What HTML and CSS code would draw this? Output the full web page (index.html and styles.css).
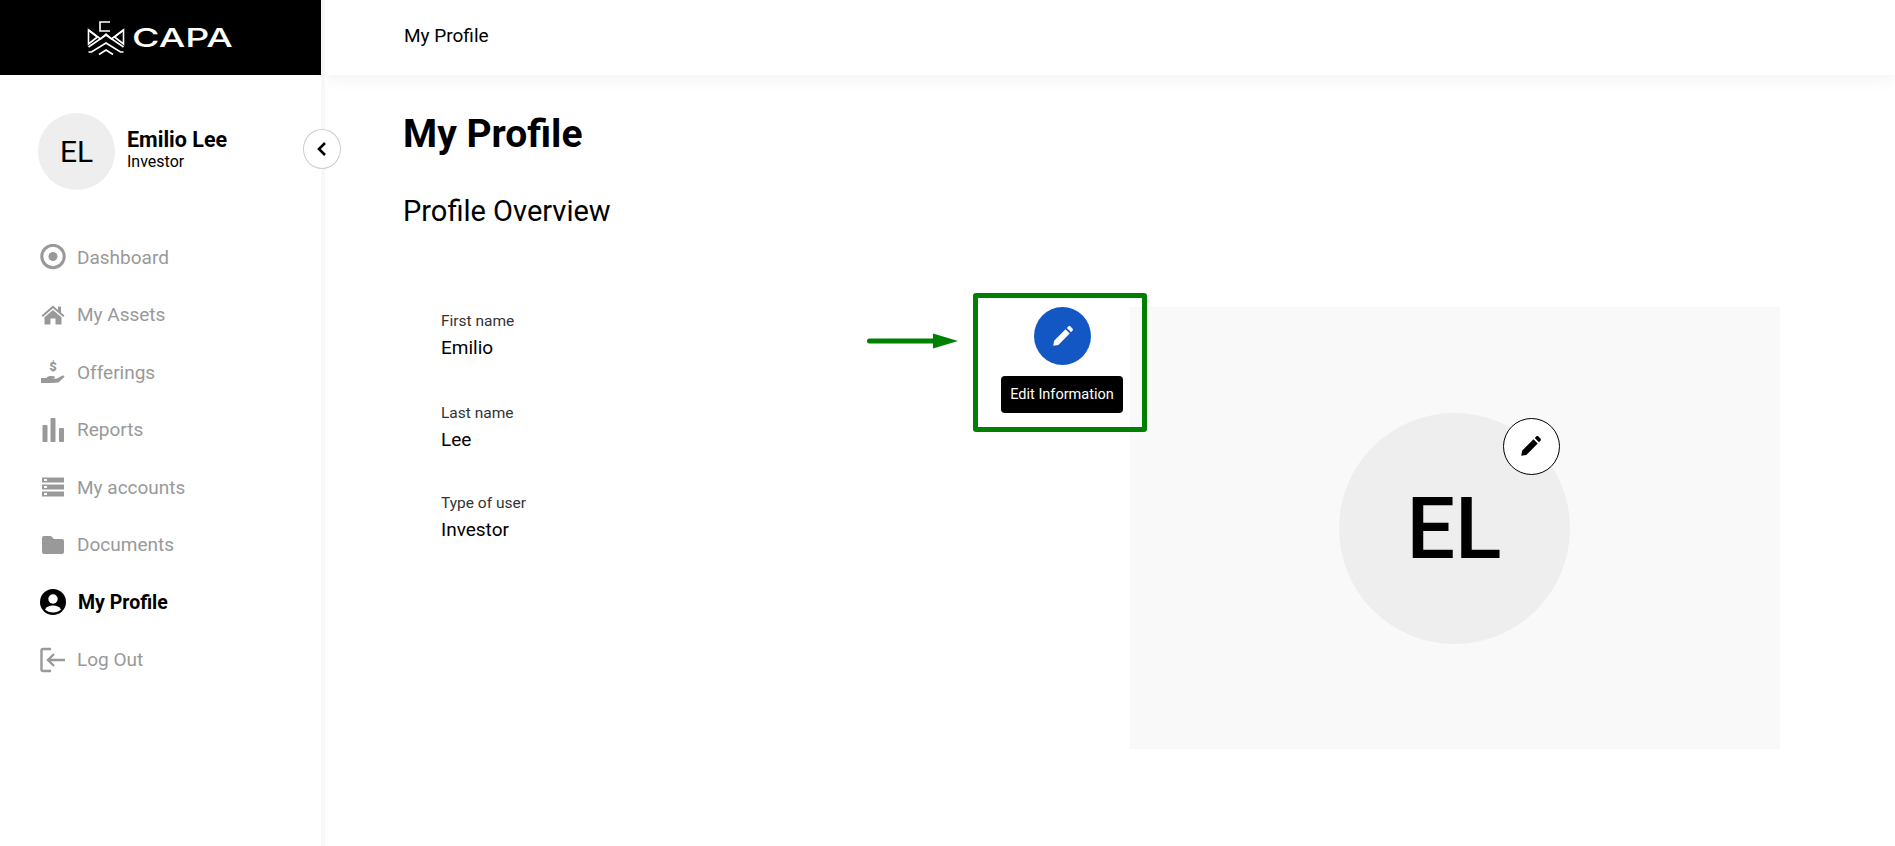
FILE: index.html
```html
<!DOCTYPE html>
<html lang="en">

<head>
    <meta charset="UTF-8">
    <meta name="viewport" content="width=device-width, initial-scale=1.0">
    <title>My Profile</title>
    <link rel="stylesheet" href="styles.css">
</head>

<body>
    <div class="app">
        <!-- sidebar -->
        <aside class="sidebar">
            <div class="logo">
                <svg class="logo-mark" viewBox="0 0 38 36" fill="none" stroke="#fff" stroke-width="1.6">
                    <path d="M23 2H13v9h10" />
                    <path d="M1.500 10v14l9-7zM36.500 10v14l-9-7z" />
                    <path d="M1.500 10l12 9 5.500-5 5.500 5 12-9" />
                    <path d="M1.500 27l17.500-12 17.500 12" />
                    <path d="M1.500 32h3l14.500-9 14.500 9h3" />
                    <path d="M12 34.500l7-4.500 7 4.500" />
                </svg>
                <span class="logo-text">CAPA</span>
            </div>
            <div class="user">
                <div class="user-avatar">EL</div>
                <div class="user-info">
                    <div class="user-name">Emilio Lee</div>
                    <div class="user-role">Investor</div>
                </div>
            </div>
            <a href="#" class="collapse">
                <svg viewBox="0 0 16 16" width="16" height="16" fill="none" stroke="#000" stroke-width="2.600">
                    <path d="M11 2L5 8l6 6" />
                </svg>
            </a>
            <ul class="nav">
                <li>
                    <a href="#">
                        <svg class="nav-icon" viewBox="0 0 26 26" fill="none" stroke="currentColor">
                            <circle cx="13" cy="12.500" r="11.200" stroke-width="3" />
                            <circle cx="13" cy="12.500" r="4.500" fill="currentColor" stroke="none" />
                        </svg>
                        Dashboard
                    </a>
                </li>
                <li>
                    <a href="#">
                        <svg class="nav-icon" viewBox="0 0 26 26" fill="currentColor">
                            <path d="M13 3.500L1.500 13.500l1.300 1.500L13 6.200 23.200 15l1.300-1.500-3.500-3V4.500h-3v3.400z" />
                            <path d="M13 8L4.500 15.300V22.500h6v-6h5v6h6v-7.200z" />
                        </svg>
                        My Assets
                    </a>
                </li>
                <li>
                    <a href="#">
                        <svg class="nav-icon" viewBox="0 0 26 26" fill="currentColor">
                            <path d="M1 19h5.500c1-1.300 2.500-2 4-1.900l3.500.2c1 .1 1.500 1.700.2 2l-3.200.3 5.500.1 6-3.200c1.300-.5 2.500.7 1.500 1.700l-5.500 5.300-7 .5H1z" />
                            <text class="nav-dollar" x="13" y="11.500" text-anchor="middle">$</text>
                        </svg>
                        Offerings
                    </a>
                </li>
                <li>
                    <a href="#">
                        <svg class="nav-icon" viewBox="0 0 26 26" fill="currentColor">
                            <rect x="2.500" y="8" width="5" height="17" rx="1" />
                            <rect x="10.500" y="1" width="5" height="24" rx="1" />
                            <rect x="19" y="11" width="5" height="14" rx="1" />
                        </svg>
                        Reports
                    </a>
                </li>
                <li>
                    <a href="#">
                        <svg class="nav-icon" viewBox="0 0 26 26" fill="currentColor">
                            <path fill-rule="evenodd" d="M2 3.500h22v5H2zM4 5v2h3V5zM2 10.500h22v5H2zM4 12v2h3v-2zM2 17.500h22v5H2zM4 19v2h3v-2z" />
                        </svg>
                        My accounts
                    </a>
                </li>
                <li>
                    <a href="#">
                        <svg class="nav-icon" viewBox="0 0 26 26" fill="currentColor">
                            <path d="M4 4h7l3 3h8a2 2 0 0 1 2 2v11a2 2 0 0 1-2 2H4a2 2 0 0 1-2-2V6a2 2 0 0 1 2-2z" />
                        </svg>
                        Documents
                    </a>
                </li>
                <li class="active">
                    <a href="#">
                        <svg class="nav-icon" viewBox="0 0 26 26">
                            <circle cx="13" cy="13" r="13" fill="currentColor" />
                            <circle cx="13" cy="10" r="4.700" fill="#fff" />
                            <path d="M5 20.500c1.500-3 4.500-4 8-4s6.500 1 8 4c-2 2-5 3-8 3s-6-1-8-3z" fill="#fff" />
                        </svg>
                        My Profile
                    </a>
                </li>
                <li>
                    <a href="#">
                        <svg class="nav-icon" viewBox="0 0 26 26" fill="none" stroke="currentColor" stroke-width="2.400">
                            <path d="M11 2H3a1.500 1.500 0 0 0-1.500 1.500v19A1.500 1.500 0 0 0 3 24h8" />
                            <path d="M25 13H8M14 7l-6 6 6 6" />
                        </svg>
                        Log Out
                    </a>
                </li>
            </ul>
        </aside>

        <!-- main area -->
        <main class="main">
            <header class="topbar">My Profile</header>
            <div class="content">
                <h1 class="title">My Profile</h1>
                <h2 class="subtitle">Profile Overview</h2>
                <div class="overview">
                    <div class="fields">
                        <div class="field">
                            <div class="field-label">First name</div>
                            <div class="field-value">Emilio</div>
                        </div>
                        <div class="field field-short">
                            <div class="field-label">Last name</div>
                            <div class="field-value">Lee</div>
                        </div>
                        <div class="field">
                            <div class="field-label">Type of user</div>
                            <div class="field-value">Investor</div>
                        </div>
                    </div>
                    <div class="edit">
                        <a href="#" class="edit-btn">
                            <svg viewBox="0 0 24 24" width="26" height="26" fill="#fff">
                                <path d="M3 21l.8-4.700L14.300 5.800l3.900 3.900L7.700 20.200zM15.500 4.600l1.300-1.300c.6-.6 1.500-.6 2.100 0l1.800 1.800c.6.6.6 1.500 0 2.100l-1.300 1.300z" />
                            </svg>
                        </a>
                        <div class="edit-tip">Edit Information</div>
                    </div>
                    <div class="photo">
                        <div class="photo-circle">
                            EL
                            <a href="#" class="photo-edit">
                                <svg viewBox="0 0 24 24" width="26" height="26" fill="#000">
                                    <path d="M3 21l.8-4.700L14.300 5.800l3.900 3.900L7.700 20.200zM15.500 4.600l1.300-1.300c.6-.6 1.500-.6 2.100 0l1.800 1.800c.6.6.6 1.500 0 2.100l-1.300 1.300z" />
                                </svg>
                            </a>
                        </div>
                    </div>
                </div>
            </div>
        </main>

        <!-- green annotation over the page -->
        <svg class="note-arrow" viewBox="0 0 92 16" width="92" height="16">
            <path d="M2.500 8h66" stroke="#008000" stroke-width="5" stroke-linecap="round" />
            <path d="M66 .5L91 8 66 15.500z" fill="#008000" />
        </svg>
        <div class="note-box"></div>
    </div>
</body>

</html>
```

FILE: styles.css
```css
* {
    margin: 0;
    padding: 0;
    box-sizing: border-box;
}

html,
body {
    height: 100%;
    overflow: hidden;
}

body {
    font-family: Roboto, "Liberation Sans", sans-serif;
    color: #000;
    background: #fff;
}

li {
    list-style: none;
}

a {
    text-decoration: none;
    color: inherit;
}

.app {
    position: relative;
    display: flex;
    height: 846px;
}

/* sidebar */
.sidebar {
    position: relative;
    flex: none;
    width: 325px;
    border-right: 4px solid #f7f7f7;
}

.logo {
    display: flex;
    align-items: center;
    justify-content: center;
    gap: 7px;
    height: 75px;
    background: #000;
    color: #fff;
}

.logo-mark {
    width: 38px;
    height: 36px;
}

.logo-text {
    width: 103px;
    font-family: Inter, sans-serif;
    font-size: 26px;
    font-weight: 500;
    line-height: 1;
    transform: scaleX(1.44);
    transform-origin: left center;
}

.user {
    display: flex;
    align-items: center;
    gap: 12px;
    padding: 38px 0 0 38px;
}

.user-avatar {
    display: flex;
    align-items: center;
    justify-content: center;
    width: 77px;
    height: 77px;
    border-radius: 50%;
    background: #eee;
    font-size: 30px;
}

.user-info {
    padding-bottom: 5px;
}

.user-name {
    font-size: 21.500px;
    font-weight: 700;
    line-height: 26px;
}

.user-role {
    font-size: 16px;
    line-height: 18px;
}

.collapse {
    position: absolute;
    top: 129px;
    left: 303px;
    z-index: 2;
    display: flex;
    align-items: center;
    justify-content: center;
    width: 38px;
    height: 40px;
    border: 1px solid #ccc;
    border-radius: 50%;
    background: #fff;
}

.nav {
    margin-top: 38.500px;
}

.nav a {
    display: flex;
    align-items: center;
    gap: 11px;
    height: 57.500px;
    padding-left: 40px;
    font-size: 19px;
    color: #999;
}

.nav-icon {
    flex: none;
    width: 26px;
    height: 26px;
}

.nav-dollar {
    font-family: Roboto, sans-serif;
    font-size: 13px;
    font-weight: 900;
}

.nav .active a {
    gap: 12px;
    font-size: 19.500px;
    font-weight: 700;
    color: #000;
}

/* main */
.main {
    flex: 1;
    min-width: 0;
}

.topbar {
    display: flex;
    align-items: center;
    height: 75px;
    padding: 0 0 4px 79px;
    font-size: 19px;
    box-shadow: 0 4px 16px rgba(0, 0, 0, .05);
}

.content {
    padding: 38px 115px 0 78px;
}

.title {
    font-size: 39px;
    font-weight: 700;
    line-height: 42px;
}

.subtitle {
    margin-top: 39px;
    font-size: 29px;
    font-weight: 400;
    line-height: 34px;
}

.overview {
    display: flex;
    margin-top: 79px;
}

.fields {
    flex: none;
    width: 631px;
    padding: 5px 0 0 38px;
}

.field {
    height: 92px;
}

.field-short {
    height: 90px;
}

.field-label {
    font-size: 15.500px;
    line-height: 18px;
    color: #333;
}

.field-value {
    margin-top: 7.500px;
    font-size: 19px;
    font-weight: 400;
    line-height: 20px;
}

.edit {
    position: relative;
    flex: none;
    width: 57px;
}

.edit-btn {
    display: flex;
    align-items: center;
    justify-content: center;
    width: 57px;
    height: 58px;
    border-radius: 50%;
    background: #1257c4;
}

.edit-tip {
    position: absolute;
    top: 69px;
    left: -33px;
    width: 122px;
    height: 37px;
    border-radius: 4px;
    background: #000;
    color: #fff;
    font-size: 14.500px;
    line-height: 37px;
    text-align: center;
}

.photo {
    display: flex;
    align-items: center;
    justify-content: center;
    width: 650px;
    height: 442px;
    margin-left: auto;
    padding-right: 2px;
    background: #f9f9f9;
}

.photo-circle {
    position: relative;
    display: flex;
    align-items: center;
    justify-content: center;
    width: 231px;
    height: 231px;
    border-radius: 50%;
    background: #eee;
    font-size: 86px;
    font-weight: 500;
}

.photo-edit {
    position: absolute;
    top: 5px;
    right: 10px;
    display: flex;
    align-items: center;
    justify-content: center;
    width: 57px;
    height: 57px;
    border: 1px solid #000;
    border-radius: 50%;
    background: #fff;
}

/* annotation */
.note-box {
    position: absolute;
    top: 293px;
    left: 973px;
    width: 174px;
    height: 139px;
    border: 5px solid #008000;
    border-radius: 3px;
}

.note-arrow {
    position: absolute;
    top: 333px;
    left: 867px;
}
```
